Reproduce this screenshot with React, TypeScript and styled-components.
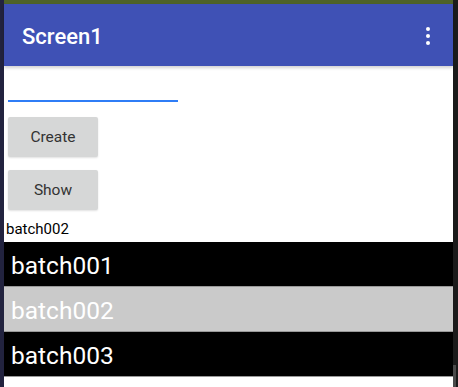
import React, { useState } from 'react'
import styled, { createGlobalStyle } from 'styled-components'

const GlobalStyle = createGlobalStyle`
    html, body {
        margin: 0;
        padding: 0;
        background: #1b1b1b;
        font-family: Roboto, "Liberation Sans", sans-serif;
    }
`

const Frame = styled.div`
    display: flex;
    width: 458px;
    height: 387px;
    overflow: hidden;
`

const LeftEdge = styled.div`
    width: 4px;
    background: #22233f;
`

const Screen = styled.div`
    flex: 1;
    display: flex;
    flex-direction: column;
    background: #fff;
`

const RightEdge = styled.div`
    width: 5px;
    background: #1b1b1b;
    display: flex;
    flex-direction: column;
    justify-content: flex-end;
`

const ScrollThumb = styled.div`
    height: 22px;
    width: 3px;
    background: #4a4a4a;
`

const StatusStrip = styled.div`
    height: 4px;
    background: #4e6228;
`

const AppBar = styled.div`
    height: 62px;
    background: #3f51b5;
    display: flex;
    align-items: center;
    justify-content: space-between;
    padding: 0 23px 0 18px;
    box-shadow: 0 2px 3px rgba(0, 0, 0, 0.18);
    position: relative;
    z-index: 1;
`

const Title = styled.div`
    color: #fff;
    font-size: 22px;
    font-weight: 500;
    padding-top: 2px;
`

const Overflow = styled.div`
    display: flex;
    flex-direction: column;
    gap: 3px;
    padding-top: 2px;
`

const Dot = styled.span`
    width: 4px;
    height: 4px;
    border-radius: 50%;
    background: #fff;
`

const Body = styled.div`
    display: flex;
    flex-direction: column;
    align-items: flex-start;
`

const TextBox = styled.input`
    margin: 8px 0 0 4px;
    width: 170px;
    height: 26px;
    border: none;
    border-bottom: 2px solid #2f7df6;
    outline: none;
    padding: 0;
    font-family: Roboto, "Liberation Sans", sans-serif;
    font-size: 16px;
    box-sizing: content-box;
`

type ButtonProps = {
    top: number
}

const Button = styled.button<ButtonProps>`
    margin: ${({ top }) => top}px 0 0 4px;
    width: 90px;
    height: 40px;
    border: none;
    border-radius: 2px;
    background: #d6d7d7;
    box-shadow: 0 1px 2px rgba(0, 0, 0, 0.12);
    color: #333;
    font-family: Roboto, "Liberation Sans", sans-serif;
    font-size: 15.5px;
    padding: 0;
`

const Label = styled.div`
    margin: 10px 0 0 2px;
    font-size: 15px;
    line-height: 18px;
    color: #000;
    height: 22px;
`

const List = styled.div`
    display: flex;
    flex-direction: column;
    align-self: stretch;
`

type RowProps = {
    selected?: boolean
}

const Row = styled.div<RowProps>`
    height: 41px;
    border-bottom: 1px solid #999;
    background: ${({ selected }) => selected ? '#cacaca' : '#000'};
    color: #fff;
    font-size: 24.5px;
    display: flex;
    align-items: center;
    padding: 3px 0 0 7px;
`

const items = ['batch001', 'batch002', 'batch003']

export default function App() {
    const [selected, setSelected] = useState('batch002')
    const [text, setText] = useState('')

    return (
        <>
            <GlobalStyle />
            <Frame>
                <LeftEdge />
                <Screen>
                    <StatusStrip />
                    <AppBar>
                        <Title>Screen1</Title>
                        <Overflow>
                            <Dot />
                            <Dot />
                            <Dot />
                        </Overflow>
                    </AppBar>
                    <Body>
                        <TextBox value={text} onChange={e => setText(e.target.value)} />
                        <Button top={15}>Create</Button>
                        <Button top={13}>Show</Button>
                        <Label>{selected}</Label>
                        <List>
                            {items.map(item => (
                                <Row key={item} selected={item === selected} onClick={() => setSelected(item)}>
                                    {item}
                                </Row>
                            ))}
                        </List>
                    </Body>
                </Screen>
                <RightEdge>
                    <ScrollThumb />
                </RightEdge>
            </Frame>
        </>
    )
}
